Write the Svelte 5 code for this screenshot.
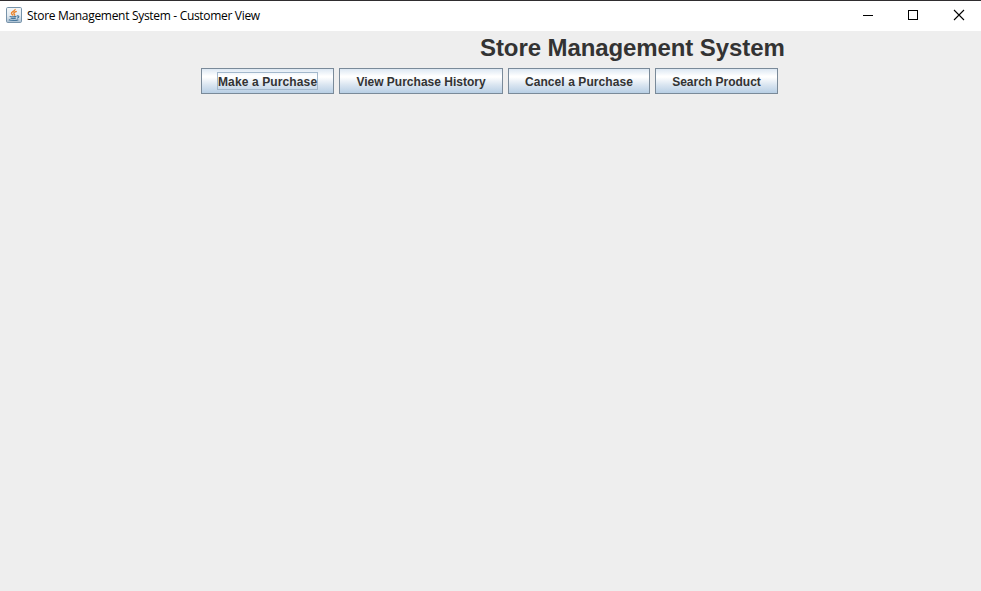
<script>
  const actions = [
    { label: 'Make a Purchase', width: 133, spacing: 0.12, focused: true },
    { label: 'View Purchase History', width: 164, spacing: 0 },
    { label: 'Cancel a Purchase', width: 142, spacing: 0.08 },
    { label: 'Search Product', width: 123, spacing: 0 }
  ];
</script>

<div class="window">
  <header class="titlebar">
    <svg class="logo" width="16" height="16" viewBox="0 0 16 16" aria-hidden="true">
      <defs>
        <linearGradient id="tile" x1="0" y1="0" x2="0" y2="1">
          <stop offset="0" stop-color="#f4f7f9" />
          <stop offset="0.55" stop-color="#e3eaf0" />
          <stop offset="1" stop-color="#a9bfd1" />
        </linearGradient>
      </defs>
      <rect x="0.5" y="0.5" width="15" height="15" rx="1.2" fill="url(#tile)" stroke="#7793aa" />
      <path d="M9.2 2C9.6 4 5 4.8 5.4 6.4C5.7 7.3 6.6 7.6 7 8.4M10.8 4.4C8.2 5 7.2 6 8.2 7C8.8 7.5 8.7 8 8.1 8.6" fill="none" stroke="#ea8228" stroke-width="1.4" />
      <path d="M3.8 9C3.8 10 8.5 10.1 10.4 9.3M4.6 11.1C6.4 11.8 8.5 11.7 10 11.1M2.8 12.8C4.5 13.8 10.5 13.8 12.4 12.7M10.8 8.9C13.8 8.6 13.2 10.8 11 11.3" fill="none" stroke="#47779c" stroke-width="1.1" />
    </svg>
    <span class="caption">Store Management System - Customer View</span>
    <div class="controls">
      <button aria-label="Minimize">
        <svg width="46" height="30" shape-rendering="crispEdges"><path d="M18 14.5h10" stroke="#000" /></svg>
      </button>
      <button aria-label="Maximize">
        <svg width="46" height="30" shape-rendering="crispEdges"><rect x="17.5" y="9.5" width="9" height="9" fill="none" stroke="#000" /></svg>
      </button>
      <button aria-label="Close">
        <svg width="46" height="30"><path d="M17 9l10 10M27 9l-10 10" stroke="#000" stroke-width="1.1" /></svg>
      </button>
    </div>
  </header>
  <main>
    <h1>Store Management System</h1>
    <nav>
      {#each actions as action}
        <button class="action" style="width: {action.width}px; letter-spacing: {action.spacing}px">
          <span class:focused={action.focused}>{action.label}</span>
        </button>
      {/each}
    </nav>
  </main>
</div>

<style>
  :global(body) {
    margin: 0;
    overflow: hidden;
  }
  .window {
    box-sizing: border-box;
    width: 981px;
    height: 591px;
    display: flex;
    flex-direction: column;
    border-top: 1px solid #2f2d2f;
    background: #eee;
    font-family: 'Liberation Sans', Arial, sans-serif;
  }
  button {
    margin: 0;
    padding: 0;
    border: 0;
    background: none;
  }
  .titlebar {
    display: flex;
    align-items: center;
    height: 30px;
    padding-left: 6px;
    background: #fff;
  }
  .logo {
    flex: none;
    margin-top: -2px;
  }
  .caption {
    margin-left: 5px;
    font: 12px/30px 'Open Sans', 'Noto Sans', sans-serif;
    letter-spacing: -0.31px;
    color: #000;
    white-space: nowrap;
  }
  .controls {
    display: flex;
    margin-left: auto;
    margin-right: -2px;
  }
  .controls svg {
    display: block;
  }
  h1 {
    margin: 3px 0 0 480px;
    font-size: 24px;
    line-height: 28px;
    font-weight: bold;
    letter-spacing: -0.09px;
    color: #333;
    white-space: nowrap;
  }
  nav {
    display: flex;
    gap: 5px;
    margin: 6px 0 0 201px;
  }
  .action {
    box-sizing: border-box;
    height: 26px;
    display: flex;
    align-items: center;
    justify-content: center;
    border: 1px solid #7a8a99;
    background: linear-gradient(#dde8f3 0%, #fff 30%, #fff 34%, #dbe6f1 65%, #b8cfe5 100%);
    font: bold 12px/18px 'Liberation Sans', Arial, sans-serif;
    color: #333;
    white-space: nowrap;
  }
  .action span {
    box-sizing: border-box;
    height: 18px;
    border: 1px solid transparent;
  }
  .action .focused {
    width: 101px;
    border-color: #a3b8cc;
  }
</style>
